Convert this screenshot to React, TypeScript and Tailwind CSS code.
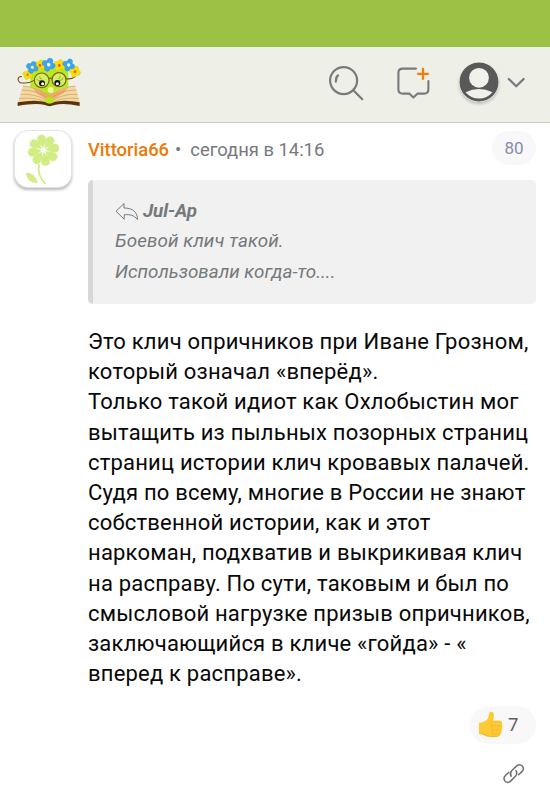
import type { ReactNode } from "react";

const parrafo = [
  "Это клич опричников при Иване Грозном,",
  "который означал «вперёд».",
  "Только такой идиот как Охлобыстин мог",
  "вытащить из пыльных позорных страниц",
  "страниц истории клич кровавых палачей.",
  "Судя по всему, многие в России не знают",
  "собственной истории, как и этот",
  "наркоман, подхватив и выкрикивая клич",
  "на расправу. По сути, таковым и был по",
  "смысловой нагрузке призыв опричников,",
  "заключающийся в кличе «гойда» - «",
  "вперед к расправе».",
];

// x, y, petal colour, centre colour, scale
const flowers: [number, number, string, string, number][] = [
  [84, 104, "#f8e000", "#ef7d0b", 0.85],
  [226, 95, "#f8e000", "#ef6a0b", 0.95],
  [121, 76, "#fbe200", "#ee5c0c", 0.95],
  [179, 76, "#fbe200", "#ee5c0c", 1],
  [98, 82, "#38a6f5", "#fff45c", 1.05],
  [147, 74, "#38a6f5", "#fffbd0", 1.15],
  [207, 75, "#38a6f5", "#ffffff", 1.05],
];

function Logo() {
  return (
    <svg width="64" height="50" viewBox="52 51 192 150" className="block">
      <rect x="92" y="86" width="114" height="82" rx="14" fill="#b9e91d" />
      <path d="M92 140Q148 176 206 140V172H92Z" fill="#a9dc17" />
      <path d="M70 137Q112 138 149 165Q184 138 227 137L240 190Q184 179 150 193Q112 179 55 190Z" fill="#f5d8a0" />
      <path d="M100 145Q130 151 149 168Q172 151 205 145L190 160L150 186L112 160Z" fill="#f5ae6a" />
      <g fill="none" stroke="#a6783c" strokeWidth="1.5" strokeOpacity=".8">
        <path d="M70 138Q113 141 149 168Q187 141 227 138" />
        <path d="M66 150Q113 150 147 176M62 163Q106 160 142 182M58 176Q104 170 138 186" />
        <path d="M231 150Q185 150 152 176M235 163Q192 160 157 182M238 176Q194 170 161 186" />
      </g>
      <path d="M54 187Q108 178 140 187H160Q192 178 240 187V198Q192 188 164 195Q150 202 136 195Q108 188 54 198Z" fill="#59340d" />
      <ellipse cx="150" cy="181" rx="14" ry="10" fill="#b8e516" />
      <circle cx="153" cy="150" r="9" fill="#f6f7a0" />
      <path d="M103 121Q91 129 76 129Q56 131 55 118Q57 108 67 110" fill="none" stroke="#72501d" strokeWidth="3.2" />
      <path d="M198 116Q216 119 228 109" fill="none" stroke="#72501d" strokeWidth="3.2" />
      {flowers.map(([x, y, petal, centre, s]) => (
        <g key={`${x}-${y}`} transform={`translate(${x} ${y}) scale(${s}) rotate(20)`}>
          <g fill={petal} stroke="#6d7d35" strokeWidth=".6" strokeOpacity=".7">
            <ellipse cy="-9" rx="8" ry="9" />
            <ellipse cy="9" rx="8" ry="9" />
            <ellipse cx="-9" rx="9" ry="8" />
            <ellipse cx="9" rx="9" ry="8" />
          </g>
          <circle r="8" fill={petal} />
          <circle r="4.6" fill={centre} />
        </g>
      ))}
      <g fill="#d5ef62" stroke="#7c6420" strokeWidth="3.6">
        <circle cx="126" cy="121" r="22" />
        <circle cx="178" cy="119" r="21" />
      </g>
      <path d="M147 117Q152 112 158 117" fill="none" stroke="#7c6420" strokeWidth="3.6" />
      <circle cx="127" cy="130" r="9" fill="#111" />
      <circle cx="173" cy="129" r="9" fill="#111" />
      <circle cx="129" cy="131" r="4.6" fill="#fff" />
      <circle cx="173" cy="131" r="4.6" fill="#fff" />
      <path d="M111 116Q114 125 122 121M120 109Q119 117 126 117M190 113Q187 124 178 121M181 107Q183 115 176 116" fill="none" stroke="#667f22" strokeWidth="1.7" />
    </svg>
  );
}

function Header() {
  return (
    <header className="flex h-[76px] items-start border-b border-[#cbccc6] bg-[#eeefe7] pl-[17px] pt-[10px]">
      <Logo />
      {/* search */}
      <svg width="38" height="38" viewBox="0 0 38 38" className="ml-[247px] mt-[7px]" fill="none" stroke="#777b7d" strokeWidth="2.2" strokeLinecap="round">
        <circle cx="15.6" cy="16.6" r="13.5" />
        <path d="M25.3 26.2L34.3 35.2" />
        <path d="M7.9 17.6Q7.6 13.4 10 11.3" />
      </svg>
      {/* new message */}
      <svg width="36" height="36" viewBox="0 0 36 36" className="ml-[30px] mt-[8px]" fill="none" strokeWidth="2.1" strokeLinecap="round" strokeLinejoin="round">
        <path d="M20 3.6H6.8Q2.4 3.6 2.4 8V24.2Q2.4 28.6 6.8 28.6H13.2L17.4 32.6L21.6 28.6H28Q32.4 28.6 32.4 24.2V16" stroke="#777b7d" />
        <path d="M27 3.1V14.7M21.2 8.9H32.8" stroke="#f17c0a" strokeWidth="2.3" strokeLinecap="butt" />
      </svg>
      <svg width="40" height="40" viewBox="0 0 40 40" className="ml-[27px] mt-[5px] rounded-full shadow-[0_2px_3px_rgba(0,0,0,0.2)]">
        <circle cx="20" cy="20" r="19.5" fill="#595959" />
        <circle cx="20" cy="15.8" r="9.9" fill="#f0f1ea" />
        <path d="M6.5 30.2Q20 24 33.5 30.2Q28 36.5 20 36.5T6.5 30.2Z" fill="#f0f1ea" />
      </svg>
      <svg width="18" height="12" viewBox="0 0 18 12" className="ml-[8px] mt-[20px]" fill="none" stroke="#777a82" strokeWidth="2.3" strokeLinecap="round" strokeLinejoin="round">
        <path d="M1.8 2L9.2 9.2L16.6 2" />
      </svg>
    </header>
  );
}

function Avatar() {
  return (
    <div className="h-[58px] w-[58px] shrink-0 rounded-[14px] border border-[#e4e4e4] bg-white shadow-[0_2px_3px_rgba(0,0,0,0.28)]">
      <svg width="56" height="56" viewBox="0 0 56 56" fill="#d1ed83">
        {[-10, 35, 80, 125, 170, 215, 260, 305].map((a) => (
          <path
            key={a}
            transform={`translate(28.5 19.2) rotate(${a})`}
            d="M0 -2C-1.8 -5 -4.5 -8.5 -4.4 -11.8Q-3.8 -16 0 -15.8T4.4 -11.8C4.5 -8.5 1.8 -5 0 -2Z"
          />
        ))}
        <path d="M24 33Q22 45 30.5 53" fill="none" stroke="#d1ed83" strokeWidth="1.8" />
        <path d="M10.8 41.5Q20 42 23 51.8Q12.5 53.2 10.8 41.5Z" />
      </svg>
    </div>
  );
}

function Pill({ children, className }: { children: ReactNode; className: string }) {
  return <div className={`flex items-center rounded-full bg-[#f8f8f9] ${className}`}>{children}</div>;
}

function Quote() {
  return (
    <blockquote className="h-[124px] rounded-[5px] border-l-[5px] border-[#d8d8d8] bg-[#f1f1f1] pl-[22px] pt-[16px] text-[18.8px] leading-[30.3px] text-[#75797b] italic">
      <div className="flex items-center font-bold">
        <svg width="24" height="20" viewBox="0 0 24 20" className="mr-[4px] mt-[2px]" fill="none" stroke="#75797b" strokeWidth="1" strokeLinejoin="round">
          <path d="M1 9.3L9 1.5V6C17 6 22.5 9.5 22.5 17.5C19 13.2 15 12.3 9.2 12.7V17.2Z" />
        </svg>
        <span className="tracking-[-0.1px]">Jul-Ap</span>
      </div>
      <p className="tracking-[0.1px]">Боевой клич такой.</p>
      <p>Использовали когда-то....</p>
    </blockquote>
  );
}

function Thumb() {
  return (
    <svg width="26" height="28" viewBox="0 0 78 84">
      <path d="M3 35Q20 34 29 23Q34 12 34 5Q37 0 43 3Q51 8 46 26L45 30H66Q74 31 73 38Q72 42 71 43Q75 46 73 52Q72 56 70 57Q73 61 70 66Q68 69 67 69Q68 76 59 77H38Q26 78 16 71Q7 68 3 68Z" fill="#fccb34" />
      <path d="M45 30H65M43 44H70M43 57H69M45 69H65M38 34Q43 38 40 44Q45 51 41 57Q45 64 43 70" fill="none" stroke="#efb52a" strokeWidth="2" strokeLinecap="round" />
      <path d="M3 67Q17 68 25 74Q37 78 59 76" fill="none" stroke="#edb020" strokeWidth="2.5" />
    </svg>
  );
}

export default function App() {
  return (
    <div className="h-[800px] w-[550px] overflow-hidden bg-white font-['Roboto',sans-serif]">
      <div className="h-[47px] bg-[#9dc145]" />
      <Header />
      <main className="flex pl-[14px] pt-[7px]">
        <Avatar />
        <article className="ml-[16px] w-[448px]">
          <div className="flex h-[50px] items-start">
            <div className="flex h-[38px] items-center pt-[1px] text-[18.4px]">
              <span className="font-medium text-[#ec7a08]">Vittoria66</span>
              <span className="ml-[6px] text-[#75797b]">•</span>
              <span className="ml-[9px] text-[#75797b]">сегодня в 14:16</span>
            </div>
            <Pill className="ml-auto mt-[1px] h-[34px] w-[44px] justify-center pt-[1px] text-[17px] text-[#858dac]">80</Pill>
          </div>
          <Quote />
          <div className="mt-[23px] whitespace-nowrap text-[22px] leading-[30.2px] tracking-[0.2px] text-[#080808]">
            {parrafo.map((linea) => (
              <p key={linea}>{linea}</p>
            ))}
          </div>
          <Pill className="ml-auto mt-[17px] h-[38px] w-[66px] pl-[8px] text-[18.5px] text-[#5d6063]">
            <Thumb />
            <span className="ml-[4px]">7</span>
          </Pill>
          <svg width="24" height="24" viewBox="0 0 24 24" className="ml-[414px] mt-[18px]" fill="none" stroke="#6d7072" strokeWidth="1.5" strokeLinecap="round">
            <path d="M9.2 14.2Q7.2 11.5 9.7 8.8L14.7 3.9Q17.6 1.4 20.3 4Q22.6 6.7 20.1 9.4L16.6 12.8" />
            <path d="M13.9 8.8Q15.9 11.7 13.4 14.3L8.6 19.1Q5.8 21.7 3.1 19.2Q.8 16.5 3.2 13.7L6.8 10.3" />
          </svg>
        </article>
      </main>
    </div>
  );
}
